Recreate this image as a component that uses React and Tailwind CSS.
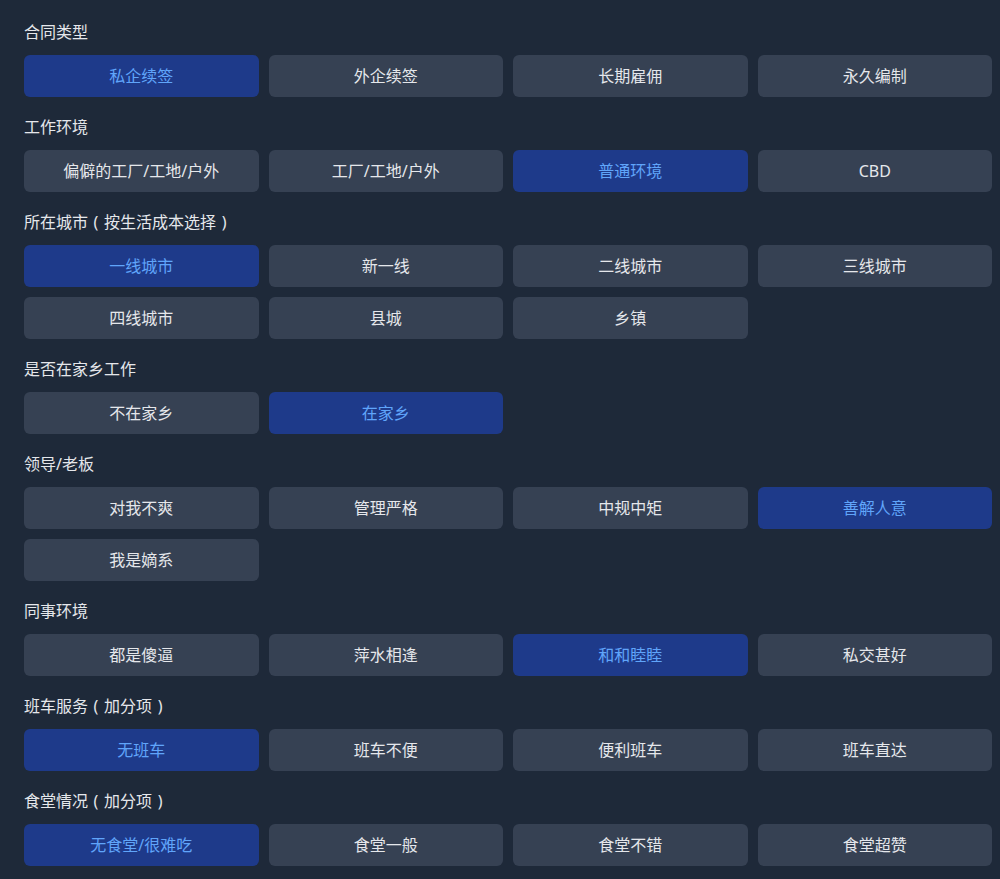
import React, { useState } from "react";

const sections = [
  { title: "合同类型", options: ["私企续签", "外企续签", "长期雇佣", "永久编制"], selected: 0 },
  { title: "工作环境", options: ["偏僻的工厂/工地/户外", "工厂/工地/户外", "普通环境", "CBD"], selected: 2 },
  {
    title: "所在城市",
    note: "按生活成本选择",
    options: ["一线城市", "新一线", "二线城市", "三线城市", "四线城市", "县城", "乡镇"],
    selected: 0,
  },
  { title: "是否在家乡工作", options: ["不在家乡", "在家乡"], selected: 1 },
  { title: "领导/老板", options: ["对我不爽", "管理严格", "中规中矩", "善解人意", "我是嫡系"], selected: 3 },
  { title: "同事环境", options: ["都是傻逼", "萍水相逢", "和和睦睦", "私交甚好"], selected: 2 },
  { title: "班车服务", note: "加分项", options: ["无班车", "班车不便", "便利班车", "班车直达"], selected: 0 },
  { title: "食堂情况", note: "加分项", options: ["无食堂/很难吃", "食堂一般", "食堂不错", "食堂超赞"], selected: 0 },
];

// full-width brackets drawn centred, like the reference font does
const Paren = ({ children }) => <span className="inline-block w-4 text-center">{children}</span>;

const Section = ({ title, note, options, initial }) => {
  const [selected, setSelected] = useState(initial);
  return (
    <div>
      <div className="text-base leading-6 text-gray-200 mb-[11px]">
        {title}
        {note && (
          <>
            <Paren>(</Paren>
            {note}
            <Paren>)</Paren>
          </>
        )}
      </div>
      <div className="grid grid-cols-4 gap-2.5">
        {options.map((opt, i) => (
          <button
            key={opt}
            onClick={() => setSelected(i)}
            className={`h-[42px] rounded-md text-base transition-colors ${
              i === selected
                ? "bg-[#1e3a8a] text-[#60a5fa]"
                : "bg-gray-700 text-gray-200 hover:bg-gray-600"
            }`}
          >
            {opt}
          </button>
        ))}
      </div>
    </div>
  );
};

export default function App() {
  return (
    <div
      className="min-h-screen bg-gray-800 pl-6 pr-2 pt-5 pb-3"
      style={{ fontFamily: '"Noto Sans", "Noto Sans CJK SC", sans-serif' }}
    >
      <div className="flex flex-col gap-[18px]">
        {sections.map((s) => (
          <Section key={s.title} title={s.title} note={s.note} options={s.options} initial={s.selected} />
        ))}
      </div>
    </div>
  );
}
